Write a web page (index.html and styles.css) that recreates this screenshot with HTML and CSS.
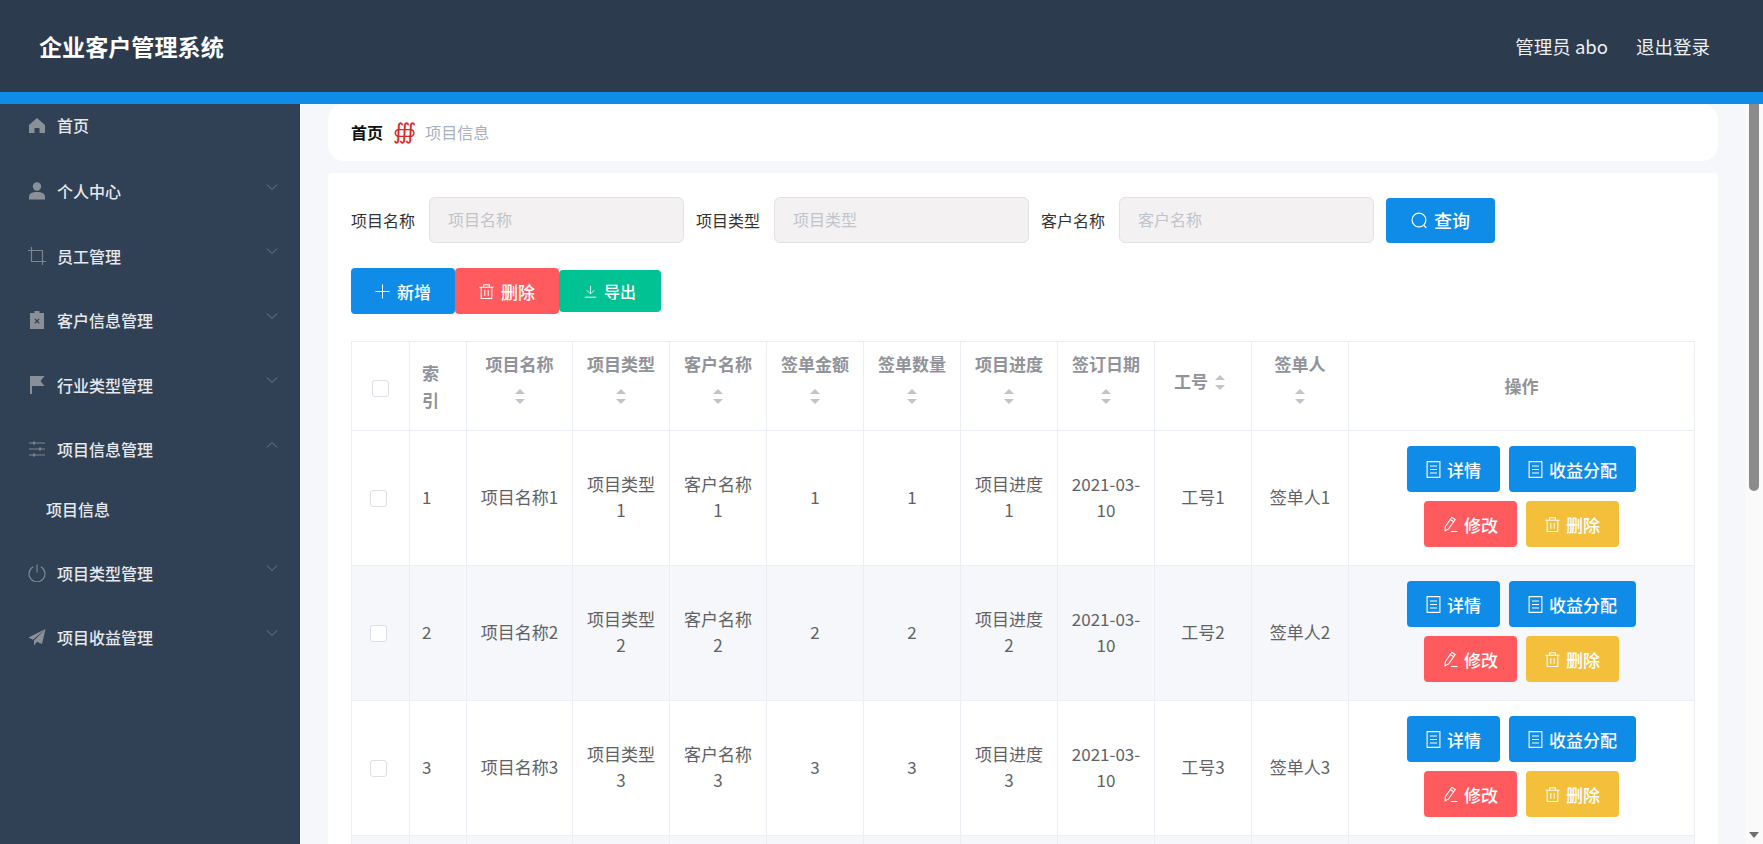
FILE: index.html
```html
<!DOCTYPE html>
<html lang="en">
<head>
    <meta charset="UTF-8">
    <title>企业客户管理系统</title>
    <link rel="stylesheet" href="styles.css">
</head>
<body>
    <svg class="sprite" aria-hidden="true">
        <symbol id="i-chevron-down" viewBox="0 0 12 8"><path d="M1 1.500l5 5 5-5"/></symbol>
        <symbol id="i-chevron-up" viewBox="0 0 12 8"><path d="M1 6.500l5-5 5 5"/></symbol>
        <symbol id="i-doc" viewBox="0 0 14 17"><path d="M.6.6h12.800v15.800H.6zM3.500 5h7M3.500 8.500h7M3.500 12h7"/></symbol>
        <symbol id="i-edit" viewBox="0 0 16 17"><path d="M9.500.8l3.500 2.400-7 10-3.800 2 .2-4.300zM7.800 3.200l3.500 2.400M8.500 16h7"/></symbol>
        <symbol id="i-trash" viewBox="0 0 16 16"><path d="M.5 3.500h15M5 3.500V.8h6v2.700M2.300 3.500v12h11.400v-12M6.200 6.500v6M9.800 6.500v6"/></symbol>
    </svg>

    <header class="topbar">
        <div class="brand">企业客户管理系统</div>
        <div class="user-links">
            <span>管理员 abo</span>
            <span>退出登录</span>
        </div>
    </header>

    <div class="layout">
        <aside class="sidebar">
            <div class="menu-item menu-home">
                <svg class="menu-icon" viewBox="0 0 18 18"><path class="solid" d="M9 2L1 9v8h5.500v-5h5v5H17V9z"/></svg>
                <span>首页</span>
            </div>
            <div class="menu-item">
                <svg class="menu-icon" viewBox="0 0 18 18"><circle class="solid" cx="9" cy="4.500" r="4.200"/><path class="solid" d="M1 15c0-3.500 3-5 8-5s8 1.500 8 5v2.500H1z"/></svg>
                <span>个人中心</span>
                <svg class="chevron"><use href="#i-chevron-down"/></svg>
            </div>
            <div class="menu-item">
                <svg class="menu-icon" viewBox="0 0 18 18"><path class="line" d="M3.500 0v14.500H18M0 3.500h14.500V18"/></svg>
                <span>员工管理</span>
                <svg class="chevron"><use href="#i-chevron-down"/></svg>
            </div>
            <div class="menu-item">
                <svg class="menu-icon" viewBox="0 0 18 18"><path class="solid" fill-rule="evenodd" d="M6.500 0h5v2H16v16H2V2h4.500zM6.300 8.300l.9-.9L9 9.200l1.800-1.800.9.9L9.900 10.100l1.800 1.800-.9.9L9 11l-1.800 1.800-.9-.9 1.800-1.800z"/></svg>
                <span>客户信息管理</span>
                <svg class="chevron"><use href="#i-chevron-down"/></svg>
            </div>
            <div class="menu-item">
                <svg class="menu-icon" viewBox="0 0 18 18"><path class="solid" d="M2 0h14.500l-4 5 4 5H4v8H2z"/></svg>
                <span>行业类型管理</span>
                <svg class="chevron"><use href="#i-chevron-down"/></svg>
            </div>
            <div class="menu-item">
                <svg class="menu-icon" viewBox="0 0 18 18"><path class="line" d="M1 3h16M1 9h16M1 15h16"/><path class="line thick" d="M6 1.500v3M12 7.500v3M6 13.500v3"/></svg>
                <span>项目信息管理</span>
                <svg class="chevron"><use href="#i-chevron-up"/></svg>
            </div>
            <div class="menu-sub">项目信息</div>
            <div class="menu-item">
                <svg class="menu-icon" viewBox="0 0 18 18"><path class="line" d="M9 .500v8M5.200 2.800a8 8 0 1 0 7.600 0"/></svg>
                <span>项目类型管理</span>
                <svg class="chevron"><use href="#i-chevron-down"/></svg>
            </div>
            <div class="menu-item">
                <svg class="menu-icon" viewBox="0 0 18 18"><path class="solid" d="M17.500 1L.5 9.500l4.500 2.300zM17.500 1L6 12.500v5l3-3.800 5 2.300z"/></svg>
                <span>项目收益管理</span>
                <svg class="chevron"><use href="#i-chevron-down"/></svg>
            </div>
        </aside>

        <main class="main">
            <div class="crumbs">
                <b>首页</b>
                <span class="crumb-sep">∰</span>
                <span class="crumb-now">项目信息</span>
            </div>

            <section class="panel">
                <form class="search-row">
                    <label>项目名称</label>
                    <input type="text" placeholder="项目名称">
                    <label>项目类型</label>
                    <input type="text" placeholder="项目类型">
                    <label>客户名称</label>
                    <input type="text" placeholder="客户名称">
                    <button type="button" class="btn btn-blue btn-search">
                        <svg class="btn-icon" viewBox="0 0 16 16"><circle cx="7.500" cy="7.500" r="6.500"/><path d="M12 12.500l2.500 2.500"/></svg>
                        查询
                    </button>
                </form>

                <div class="toolbar">
                    <button class="btn btn-blue btn-tool">
                        <svg class="btn-icon" viewBox="0 0 16 16"><path d="M8 .500v15M.5 8h15"/></svg>
                        新增
                    </button>
                    <button class="btn btn-red btn-tool">
                        <svg class="btn-icon"><use href="#i-trash"/></svg>
                        删除
                    </button>
                    <button class="btn btn-green btn-tool btn-export">
                        <svg class="btn-icon" viewBox="0 0 16 16"><path d="M8 1v9.500M3.500 6.500L8 11l4.500-4.500M1 15h14"/></svg>
                        导出
                    </button>
                </div>

                <table class="grid">
                    <colgroup>
                        <col class="col-check">
                        <col class="col-index">
                        <col class="col-name">
                        <col class="col-std"><col class="col-std"><col class="col-std"><col class="col-std">
                        <col class="col-std"><col class="col-std"><col class="col-std"><col class="col-std">
                        <col class="col-action">
                    </colgroup>
                    <thead>
                        <tr>
                            <th><span class="check"></span></th>
                            <th class="left">索引</th>
                            <th class="sortable">项目名称<span class="sort"></span></th>
                            <th class="sortable">项目类型<span class="sort"></span></th>
                            <th class="sortable">客户名称<span class="sort"></span></th>
                            <th class="sortable">签单金额<span class="sort"></span></th>
                            <th class="sortable">签单数量<span class="sort"></span></th>
                            <th class="sortable">项目进度<span class="sort"></span></th>
                            <th class="sortable">签订日期<span class="sort"></span></th>
                            <th class="sortable">工号<span class="sort"></span></th>
                            <th class="sortable">签单人<span class="sort"></span></th>
                            <th>操作</th>
                        </tr>
                    </thead>
                    <tbody>
                        <tr>
                            <td><span class="check check-row"></span></td>
                            <td class="left">1</td>
                            <td>项目名称1</td>
                            <td>项目类型1</td>
                            <td>客户名称1</td>
                            <td>1</td>
                            <td>1</td>
                            <td>项目进度1</td>
                            <td>2021-03-10</td>
                            <td>工号1</td>
                            <td>签单人1</td>
                            <td>
                                <div class="actions">
                                    <button class="btn btn-blue btn-row"><svg class="btn-icon"><use href="#i-doc"/></svg>详情</button>
                                    <button class="btn btn-blue btn-row"><svg class="btn-icon"><use href="#i-doc"/></svg>收益分配</button>
                                    <button class="btn btn-red btn-row"><svg class="btn-icon"><use href="#i-edit"/></svg>修改</button>
                                    <button class="btn btn-yellow btn-row"><svg class="btn-icon"><use href="#i-trash"/></svg>删除</button>
                                </div>
                            </td>
                        </tr>
                        <tr>
                            <td><span class="check check-row"></span></td>
                            <td class="left">2</td>
                            <td>项目名称2</td>
                            <td>项目类型2</td>
                            <td>客户名称2</td>
                            <td>2</td>
                            <td>2</td>
                            <td>项目进度2</td>
                            <td>2021-03-10</td>
                            <td>工号2</td>
                            <td>签单人2</td>
                            <td>
                                <div class="actions">
                                    <button class="btn btn-blue btn-row"><svg class="btn-icon"><use href="#i-doc"/></svg>详情</button>
                                    <button class="btn btn-blue btn-row"><svg class="btn-icon"><use href="#i-doc"/></svg>收益分配</button>
                                    <button class="btn btn-red btn-row"><svg class="btn-icon"><use href="#i-edit"/></svg>修改</button>
                                    <button class="btn btn-yellow btn-row"><svg class="btn-icon"><use href="#i-trash"/></svg>删除</button>
                                </div>
                            </td>
                        </tr>
                        <tr>
                            <td><span class="check check-row"></span></td>
                            <td class="left">3</td>
                            <td>项目名称3</td>
                            <td>项目类型3</td>
                            <td>客户名称3</td>
                            <td>3</td>
                            <td>3</td>
                            <td>项目进度3</td>
                            <td>2021-03-10</td>
                            <td>工号3</td>
                            <td>签单人3</td>
                            <td>
                                <div class="actions">
                                    <button class="btn btn-blue btn-row"><svg class="btn-icon"><use href="#i-doc"/></svg>详情</button>
                                    <button class="btn btn-blue btn-row"><svg class="btn-icon"><use href="#i-doc"/></svg>收益分配</button>
                                    <button class="btn btn-red btn-row"><svg class="btn-icon"><use href="#i-edit"/></svg>修改</button>
                                    <button class="btn btn-yellow btn-row"><svg class="btn-icon"><use href="#i-trash"/></svg>删除</button>
                                </div>
                            </td>
                        </tr>
                        <!-- only the top edge of row 4 shows above the fold -->
                        <tr>
                            <td></td><td></td><td></td><td></td><td></td><td></td>
                            <td></td><td></td><td></td><td></td><td></td><td></td>
                        </tr>
                    </tbody>
                </table>
            </section>
        </main>

        <div class="scroll-rail">
            <div class="scroll-thumb"></div>
            <div class="scroll-arrow"></div>
        </div>
    </div>
</body>
</html>
```

FILE: styles.css
```css
html, body {
    height: 100%;
}
body {
    margin: 0;
    overflow: hidden;
    display: flex;
    flex-direction: column;
    font-family: "Noto Sans CJK SC", "Noto Sans", sans-serif;
    color: #606266;
    background: #f5f7fa;
}
.sprite {
    display: none;
}

/* top bar */
.topbar {
    flex: none;
    height: 92px;
    border-bottom: 12px solid #0e8ce8;
    background: #2c3b4e;
    padding: 0 53px 0 39px;
    display: flex;
    align-items: center;
    justify-content: space-between;
    color: #fff;
}
.brand {
    font-size: 23.1px;
    font-weight: 700;
}
.user-links {
    display: flex;
    gap: 28px;
    font-size: 18.5px;
    color: #eef0f2;
}

/* layout */
.layout {
    flex: 1;
    display: flex;
    min-height: 0;
}
.sidebar {
    flex: none;
    width: 300px;
    background: #304156;
    color: #e6e8eb;
    font-size: 16px;
    font-weight: 500;
}
.menu-item {
    height: 64.5px;
    display: flex;
    align-items: center;
    padding: 0 22px 2px 28px;
    box-sizing: border-box;
    position: relative;
}
.menu-item span {
    margin-left: 11px;
}
.menu-home {
    height: 56px;
    padding-bottom: 15px;
}
.menu-icon {
    width: 18px;
    height: 18px;
    flex: none;
}
.menu-icon .solid {
    fill: #8b8f98;
}
.menu-icon .line {
    fill: none;
    stroke: #7f858f;
    stroke-width: 1.2;
}
.menu-icon .thick {
    stroke-width: 2;
}
.chevron {
    width: 12px;
    height: 8px;
    margin-left: auto;
    margin-bottom: 9px;
    fill: none;
    stroke: #6f7a89;
    stroke-width: 1;
}
.menu-sub {
    height: 59px;
    line-height: 52px;
    padding-left: 46px;
}

/* main area */
.main {
    flex: 1;
    min-width: 0;
    overflow: hidden;
    padding: 0 27px 0 28px;
}
.scroll-rail {
    flex: none;
    width: 18px;
    display: flex;
    flex-direction: column;
    align-items: center;
    justify-content: space-between;
    background: #fafafa;
}
.scroll-thumb {
    width: 10px;
    height: 387px;
    background: #8b8b8b;
    border-radius: 0 0 5px 5px;
}
.scroll-arrow {
    width: 0;
    height: 0;
    margin-bottom: 6px;
    border: 5px solid transparent;
    border-bottom: none;
    border-top: 6px solid #6e6e6e;
}

.crumbs {
    height: 57px;
    background: #fff;
    border-radius: 16px;
    display: flex;
    align-items: center;
    padding: 0 0 2px 23px;
    box-sizing: border-box;
    font-size: 16px;
    color: #111;
}
.crumb-sep {
    margin: 0 9px 0 10px;
    font-family: "DejaVu Sans", sans-serif;
    font-size: 22px;
    line-height: 1;
    color: #e02525;
}
.crumb-now {
    color: #a9b0bf;
}

.panel {
    margin-top: 12px;
    box-sizing: border-box;
    background: #fff;
    border-radius: 4px;
    padding: 24px 24px 24px 23px;
}

/* search */
.search-row {
    display: flex;
    align-items: center;
    font-size: 16px;
}
.search-row label {
    margin-right: 14px;
    color: #333;
}
.search-row input {
    width: 255px;
    height: 46px;
    box-sizing: border-box;
    margin-right: 12px;
    padding: 0 18px 2px;
    border: 1px solid #e2e2e2;
    border-radius: 6px;
    background: #f3f1f1;
    font: inherit;
}
.search-row input::placeholder {
    color: #c0c4cc;
}

/* buttons */
.btn {
    display: inline-flex;
    align-items: center;
    justify-content: center;
    border: none;
    border-radius: 4px;
    padding: 0;
    color: #fff;
    font-family: inherit;
    font-weight: 500;
    cursor: pointer;
}
.btn-blue {
    background: #0e8ce8;
}
.btn-red {
    background: #ff5b5f;
}
.btn-green {
    background: #00c292;
}
.btn-yellow {
    background: #f4c03b;
}
.btn-icon {
    width: 15px;
    height: 15px;
    margin-right: 7px;
    fill: none;
    stroke: currentColor;
    stroke-width: 1.1;
}
.btn-search {
    width: 109px;
    height: 45px;
    font-size: 18px;
}
.btn-search .btn-icon {
    width: 17px;
    height: 17px;
    margin-right: 6px;
}
.toolbar {
    display: flex;
    align-items: center;
    margin-top: 25px;
}
.btn-tool {
    width: 104px;
    height: 46px;
    font-size: 17px;
}
.btn-export {
    width: 102px;
    height: 42px;
    font-size: 16px;
}
.btn-export .btn-icon {
    width: 13px;
    height: 13px;
}

/* table */
.grid {
    width: 100%;
    margin-top: 27px;
    table-layout: fixed;
    border-collapse: collapse;
    font-size: 17px;
    line-height: 26px;
    color: #606266;
}
.col-check {
    width: 58px;
}
.col-index {
    width: 57px;
}
.col-name {
    width: 106px;
}
.col-std {
    width: 97px;
}
.col-action {
    width: 346px;
}
.grid th,
.grid td {
    border: 1px solid #ebeef5;
    padding: 0 12px;
    text-align: center;
    vertical-align: middle;
}
.grid th {
    height: 89px;
    padding-bottom: 1px;
    box-sizing: border-box;
    color: #909399;
    font-weight: 700;
    line-height: 27px;
}
.grid th.sortable {
    padding-bottom: 7px;
}
.grid td {
    height: 135px;
    padding-bottom: 3px;
    box-sizing: border-box;
}
.grid .left {
    text-align: left;
}
.grid tbody tr:nth-child(even) {
    background: #f5f7fa;
}
.check {
    display: inline-block;
    width: 17px;
    height: 17px;
    box-sizing: border-box;
    border: 1px solid #dcdfe6;
    border-radius: 3px;
    background: #fff;
    vertical-align: middle;
}
.check-row {
    margin-right: 4px;
}
.sort {
    display: inline-block;
    position: relative;
    width: 24px;
    height: 38px;
    vertical-align: middle;
}
.sort::before,
.sort::after {
    content: "";
    position: absolute;
    left: 7px;
    border: 5px solid transparent;
}
.sort::before {
    top: calc(50% - 12.5px);
    border-bottom-color: #c0c4cc;
}
.sort::after {
    bottom: calc(50% - 12.5px);
    border-top-color: #c0c4cc;
}
.actions {
    display: flex;
    flex-wrap: wrap;
    justify-content: center;
    gap: 9px;
}
.btn-row {
    height: 46px;
    padding: 0 19px;
    font-size: 17px;
}
.btn-row .btn-icon {
    width: 15px;
    height: 17px;
    margin-right: 6px;
}
```
